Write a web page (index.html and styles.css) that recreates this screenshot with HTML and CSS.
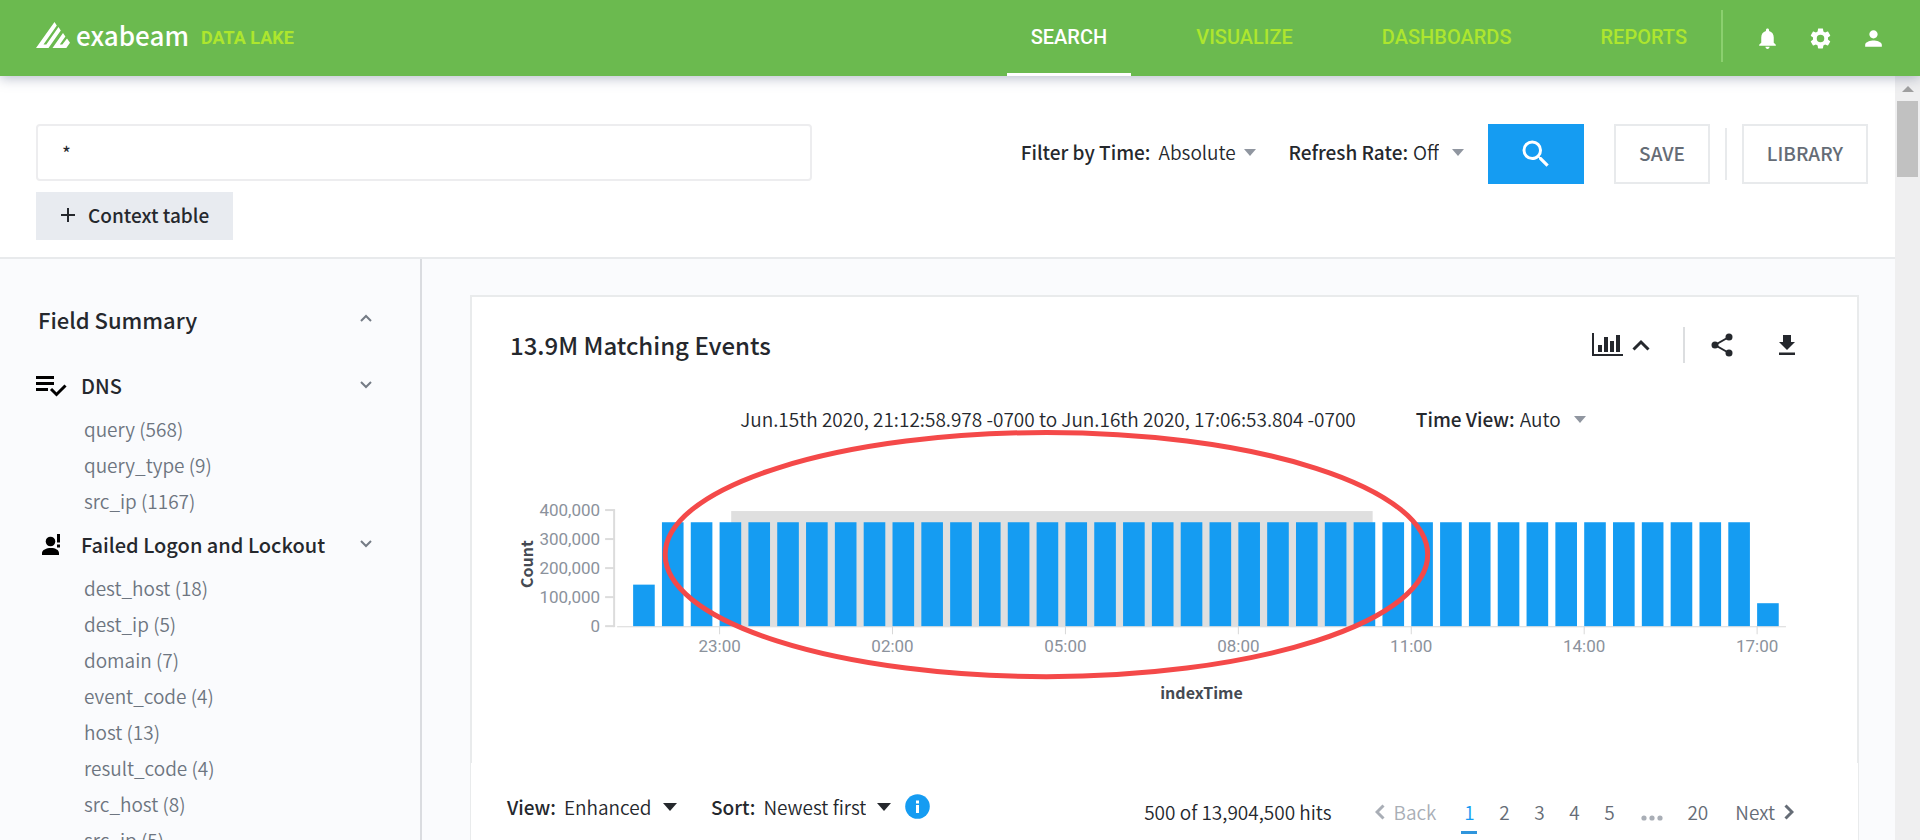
FILE: index.html
```html
<!DOCTYPE html>
<html lang="en">
<head>
<meta charset="utf-8">
<title>Exabeam Data Lake - Search</title>
<link rel="stylesheet" href="styles.css">
</head>
<body>
<header class="topbar">
  <a class="brand" href="#">
    <svg class="brand-mark" width="35" height="26" viewBox="0 0 35 26" aria-hidden="true">
      <path fill="#fff" d="M0 26 18.500 0 20.800 3.500 7.500 22.500H10.300L22.500 5 24.800 8.500 12.500 26ZM16.500 26 27 11 29.400 14.500 23.800 22.500H26.300L31 16.500 34 20.800 30.300 26Z"/>
    </svg>
    <span class="brand-name">exabeam</span>
    <span class="brand-product">DATA LAKE</span>
  </a>
  <nav class="tabs">
    <a class="tab tab-active" href="#">SEARCH</a>
    <a class="tab" href="#">VISUALIZE</a>
    <a class="tab" href="#">DASHBOARDS</a>
    <a class="tab" href="#">REPORTS</a>
  </nav>
  <div class="top-actions">
    <button class="icon-btn" aria-label="Notifications"><svg width="25" height="25" viewBox="0 0 24 24"><path d="M12 22c1.100 0 2-.9 2-2h-4c0 1.100.89 2 2 2zm6-6v-5c0-3.070-1.640-5.640-4.500-6.320V4c0-.83-.67-1.500-1.500-1.500s-1.500.67-1.500 1.500v.68C7.630 5.360 6 7.920 6 11v5l-2 2v1h16v-1l-2-2z"/></svg></button>
    <button class="icon-btn" aria-label="Settings"><svg width="25" height="25" viewBox="0 0 24 24"><path d="M19.140 12.940c.04-.3.06-.61.06-.94 0-.32-.02-.64-.07-.94l2.030-1.580c.18-.14.23-.41.12-.61l-1.920-3.320c-.12-.22-.37-.29-.59-.22l-2.390.96c-.5-.38-1.030-.7-1.620-.94l-.36-2.540c-.04-.24-.24-.41-.48-.41h-3.840c-.24 0-.43.17-.47.41l-.36 2.540c-.59.24-1.130.57-1.620.94l-2.390-.96c-.22-.08-.47 0-.59.22L2.740 8.870c-.12.21-.08.47.12.61l2.030 1.580c-.05.3-.09.63-.09.94s.02.64.07.94l-2.030 1.580c-.18.14-.23.41-.12.61l1.920 3.320c.12.22.37.29.59.22l2.390-.96c.5.38 1.030.7 1.620.94l.36 2.540c.05.24.24.41.48.41h3.840c.24 0 .44-.17.47-.41l.36-2.540c.59-.24 1.130-.56 1.620-.94l2.390.96c.22.08.47 0 .59-.22l1.920-3.320c.12-.22.07-.47-.12-.61l-2.010-1.580zM12 15.600A3.600 3.600 0 1 1 12 8.400a3.600 3.600 0 0 1 0 7.200z"/></svg></button>
    <button class="icon-btn" aria-label="Account"><svg width="25" height="25" viewBox="0 0 24 24"><path d="M12 12c2.210 0 4-1.790 4-4s-1.790-4-4-4-4 1.790-4 4 1.790 4 4 4zm0 2c-2.670 0-8 1.340-8 4v2h16v-2c0-2.660-5.330-4-8-4z"/></svg></button>
  </div>
</header>

<div class="viewport">
  <div class="page">
    <form class="searchbar">
      <div class="query">
        <input class="query-input" type="text" value="*" aria-label="Search query">
        <button class="context-btn" type="button">
          <svg width="16" height="16" viewBox="0 0 16 16" aria-hidden="true"><path d="M8 1v14M1 8h14" stroke="#25282d" stroke-width="2"/></svg>
          Context table
        </button>
      </div>
      <div class="controls">
        <div class="picker">
          <label for="time">Filter by Time:</label>
          <select id="time"><option>Absolute</option></select>
          <svg class="caret" width="12" height="7" viewBox="0 0 12 7" aria-hidden="true"><path d="M0 0h12L6 7z"/></svg>
        </div>
        <div class="picker picker-tight">
          <label for="rate">Refresh Rate:</label>
          <select id="rate"><option>Off</option></select>
          <svg class="caret" width="12" height="7" viewBox="0 0 12 7" aria-hidden="true"><path d="M0 0h12L6 7z"/></svg>
        </div>
        <button class="go-btn" type="submit" aria-label="Search"><svg width="36" height="36" viewBox="0 0 24 24"><path d="M15.500 14h-.79l-.28-.27A6.470 6.470 0 0 0 16 9.500 6.500 6.500 0 1 0 9.500 16c1.610 0 3.090-.59 4.230-1.570l.27.28v.79l5 4.990L20.490 19l-4.990-5zm-6 0C7.010 14 5 11.990 5 9.500S7.010 5 9.500 5 14 7.010 14 9.500 11.990 14 9.500 14z"/></svg></button>
        <button class="box-btn" type="button">SAVE</button>
        <span class="rule"></span>
        <button class="box-btn" type="button">LIBRARY</button>
      </div>
    </form>

    <div class="columns">
      <aside class="fields">
        <div class="fields-head">
          <h2>Field Summary</h2>
          <button class="chev-btn" aria-label="Collapse field summary"><svg width="12" height="8" viewBox="0 0 12 8"><path d="M1 7l5-5 5 5"/></svg></button>
        </div>
        <section class="group">
          <div class="group-head">
            <svg width="32" height="22" viewBox="0 0 32 22" aria-hidden="true"><path d="M0 2.500h18M0 8.500h18M0 14.500h12M15 14l5.500 5.500L29.500 10.500" fill="none" stroke="#000" stroke-width="3"/></svg>
            <h3>DNS</h3>
            <button class="chev-btn" aria-label="Toggle DNS"><svg width="12" height="8" viewBox="0 0 12 8"><path d="M1 1l5 5 5-5"/></svg></button>
          </div>
          <ul>
            <li><a href="#">query (568)</a></li>
            <li><a href="#">query_type (9)</a></li>
            <li><a href="#">src_ip (1167)</a></li>
          </ul>
        </section>
        <section class="group">
          <div class="group-head">
            <svg width="32" height="22" viewBox="0 0 32 22" aria-hidden="true"><circle cx="14.500" cy="7.500" r="4.800"/><path d="M6 21v-2c0-3 4.500-5 9-5s8 2 8 5v2zM21 0h3v8.500h-3zM21 10.500h3v3h-3z"/></svg>
            <h3>Failed Logon and Lockout</h3>
            <button class="chev-btn" aria-label="Toggle Failed Logon and Lockout"><svg width="12" height="8" viewBox="0 0 12 8"><path d="M1 1l5 5 5-5"/></svg></button>
          </div>
          <ul>
            <li><a href="#">dest_host (18)</a></li>
            <li><a href="#">dest_ip (5)</a></li>
            <li><a href="#">domain (7)</a></li>
            <li><a href="#">event_code (4)</a></li>
            <li><a href="#">host (13)</a></li>
            <li><a href="#">result_code (4)</a></li>
            <li><a href="#">src_host (8)</a></li>
            <li><a href="#">src_ip (5)</a></li>
          </ul>
        </section>
      </aside>

      <main class="results">
        <section class="card">
          <div class="card-head">
            <h1>13.9M Matching Events</h1>
            <div class="card-tools">
              <button class="tool" aria-label="Toggle chart">
                <svg width="31" height="24" viewBox="0 0 31 24"><path d="M0 0h2v21h29v2H0zM6 12h4v7H6zM12 4h4v15h-4zM18 8h4v11h-4zM24 2h4v17h-4z"/></svg>
                <svg width="18" height="12" viewBox="0 0 18 12"><path d="M1.500 10.500 9 3l7.500 7.500" fill="none" stroke="#25282d" stroke-width="3"/></svg>
              </button>
              <span class="tool-rule"></span>
              <button class="tool" aria-label="Share"><svg width="22" height="24" viewBox="0 0 22 24"><path d="M18 4 4 12l14 8" fill="none" stroke="#25282d" stroke-width="2"/><circle cx="18" cy="4" r="3.500"/><circle cx="4" cy="12" r="3.500"/><circle cx="18" cy="20" r="3.500"/></svg></button>
              <button class="tool" aria-label="Download"><svg width="16" height="20" viewBox="0 0 16 20"><path d="M4 0h8v7h4l-8 8-8-8h4zM0 17.500h16V20H0z"/></svg></button>
            </div>
          </div>
          <div class="range">
            <span>Jun.15th 2020, 21:12:58.978 -0700 to Jun.16th 2020, 17:06:53.804 -0700</span>
            <div class="picker picker-tight">
              <label for="tview">Time View:</label>
              <select id="tview"><option>Auto</option></select>
              <svg class="caret" width="12" height="7" viewBox="0 0 12 7" aria-hidden="true"><path d="M0 0h12L6 7z"/></svg>
            </div>
          </div>
          <svg class="chart" id="chart" viewBox="0 0 1384 332" role="img" aria-label="Events by indexTime"></svg>
        </section>

        <section class="list-bar">
          <div class="list-opts">
            <div class="picker">
              <label for="view">View:</label>
              <select id="view"><option>Enhanced</option></select>
              <svg class="caret caret-dark" width="14" height="8" viewBox="0 0 14 8" aria-hidden="true"><path d="M0 0h14L7 8z"/></svg>
            </div>
            <div class="picker">
              <label for="sort">Sort:</label>
              <select id="sort"><option>Newest first</option></select>
              <svg class="caret caret-dark" width="14" height="8" viewBox="0 0 14 8" aria-hidden="true"><path d="M0 0h14L7 8z"/></svg>
            </div>
            <button class="info" aria-label="Information"><svg width="25" height="25" viewBox="0 0 25 25"><circle cx="12.500" cy="12.500" r="12.300" fill="#159cf2"/><path d="M11 6.500h3v3h-3zM11 11h3v8h-3z" fill="#fff"/></svg></button>
          </div>
          <div class="pager">
            <span class="hits">500 of 13,904,500 hits</span>
            <a class="step step-off" href="#"><svg width="10" height="16" viewBox="0 0 10 16"><path d="M8.500 1.500 2 8l6.500 6.500"/></svg>Back</a>
            <div class="pages">
              <a class="num num-on" href="#">1</a>
              <a class="num" href="#">2</a>
              <a class="num" href="#">3</a>
              <a class="num" href="#">4</a>
              <a class="num" href="#">5</a>
              <svg class="dots" width="22" height="6" viewBox="0 0 22 6" aria-label="more pages"><circle cx="3" cy="3" r="2.600"/><circle cx="11" cy="3" r="2.600"/><circle cx="19" cy="3" r="2.600"/></svg>
              <a class="num" href="#">20</a>
            </div>
            <a class="step" href="#">Next<svg width="10" height="16" viewBox="0 0 10 16"><path d="M1.500 1.500 8 8l-6.500 6.500"/></svg></a>
          </div>
        </section>
      </main>
    </div>
  </div>
  <div class="scroll" aria-hidden="true">
    <svg width="12" height="6" viewBox="0 0 12 6"><path d="M6 0l6 6H0z" fill="#a0a0a0"/></svg>
    <div class="thumb"></div>
  </div>
</div>
<script src="chart.js"></script>
</body>
</html>
```
FILE: styles.css
```css
* { box-sizing: border-box; }
body {
  margin: 0;
  height: 100vh;
  display: flex;
  flex-direction: column;
  overflow: hidden;
  font-family: "Noto Sans CJK SC", "Noto Sans", sans-serif;
  font-size: 19px;
  line-height: 24px;
  color: #25282d;
  background: #fff;
}
h1, h2, h3, ul { margin: 0; padding: 0; font-weight: 500; }
ul { list-style: none; }
a { color: inherit; text-decoration: none; }
button, input, select { font: inherit; color: inherit; }
button { background: none; border: 0; padding: 0; }
svg { display: block; flex: none; }

.topbar {
  position: relative;
  z-index: 1;
  flex: none;
  height: 76px;
  display: flex;
  align-items: stretch;
  padding: 0 34px 0 36px;
  background: #6bba4f;
  box-shadow: 0 2px 12px rgba(70, 85, 120, .4);
}
.brand { display: flex; align-items: center; margin-right: auto; }
.brand-mark { margin: 0 5px 6px 0; }
.brand-name { color: #fff; font-size: 26px; font-weight: 500; line-height: 32px; padding-bottom: 6px; }
.brand-product {
  margin-left: 12px;
  color: #ade62e;
  font: 700 18px/24px Roboto, sans-serif;
}
.tabs { display: flex; gap: 41px; }
.tab {
  padding: 25px 24px 0;
  font: 500 20px/24px Roboto, sans-serif;
  color: #ade62e;
}
.tab-active { color: #fff; border-bottom: 3px solid #fff; }
.top-actions {
  display: flex;
  align-items: center;
  gap: 28px;
  height: 52px;
  margin: 10px 0 0 10px;
  padding: 4px 0 0 32px;
  border-left: 2px solid #8bd06f;
}
.icon-btn svg { fill: #fff; }

.viewport { flex: 1; min-height: 0; display: flex; overflow: hidden; }
.page { flex: 1; min-width: 0; display: flex; flex-direction: column; }
.scroll {
  width: 25px;
  background: #efeff0;
  display: flex;
  flex-direction: column;
  align-items: center;
  gap: 9px;
  padding-top: 10px;
}
.thumb { width: 21px; height: 76px; background: #c1c1c1; }

.searchbar {
  flex: none;
  display: flex;
  justify-content: space-between;
  gap: 40px;
  padding: 48px 27px 17px 36px;
  border-bottom: 2px solid #e8eaec;
}
.query { flex: 0 1 776px; display: flex; flex-direction: column; align-items: flex-start; gap: 11px; }
.query-input {
  width: 100%;
  height: 57px;
  padding: 0 24px;
  border: 2px solid #ededef;
  border-radius: 4px;
  background: #fff;
}
.context-btn {
  display: flex;
  align-items: center;
  gap: 12px;
  height: 48px;
  padding: 0 24px 2px;
  background: #e8ebf0;
  font-weight: 500;
}
.controls { display: flex; align-items: center; height: 60px; }
.picker { display: flex; align-items: center; gap: 8px; }
.picker-tight { gap: 5px; }
.picker label { font-weight: 500; }
.picker select {
  appearance: none;
  border: 0;
  padding: 0;
  background: none;
  font-weight: 350;
}
.caret { fill: #9096a0; }
.picker-tight .caret { margin-left: 8px; }
.caret-dark { fill: #25282d; }
.controls .picker { margin-right: 32px; padding-bottom: 4px; }
.controls .picker-tight { margin-right: 24px; }
.go-btn {
  display: flex;
  align-items: center;
  justify-content: center;
  width: 96px;
  height: 60px;
  margin-right: 30px;
  background: #159cf2;
}
.go-btn svg { fill: #fff; }
.box-btn {
  height: 60px;
  padding: 0 23px 2px;
  border: 2px solid #e8eaec;
  color: #656c76;
  font-weight: 500;
}
.rule { width: 2px; height: 52px; margin: 0 15px; background: #e8eaec; }

.columns { flex: 1; min-height: 0; display: flex; background: #fafbfd; }
.fields {
  flex: none;
  width: 422px;
  padding: 46px 48px 0 36px;
  border-right: 2px solid #dadce0;
}
.fields-head { display: flex; align-items: center; justify-content: space-between; padding-left: 2px; margin-bottom: 35px; }
.fields-head h2 { font-size: 22px; line-height: 28px; }
.chev-btn { padding-bottom: 3px; }
.chev-btn svg { fill: none; stroke: #747b85; stroke-width: 2; }
.group { margin-bottom: 8px; }
.group-head { display: flex; align-items: center; height: 36px; margin-bottom: 7px; }
.group-head h3 { flex: 1; margin-left: 13px; font-size: 20px; line-height: 24px; }
.group li { padding-left: 48px; line-height: 36px; color: #6d7580; font-weight: 350; }

.results { flex: 1; min-width: 0; padding: 36px 36px 0 48px; }
.card { border: 2px solid #e9ebec; border-bottom: 0; background: #fff; }
.card-head { display: flex; align-items: center; justify-content: space-between; padding: 30px 62px 0 38px; }
.card-head h1 { font-size: 24px; line-height: 36px; }
.card-tools { display: flex; align-items: center; }
.tool { display: flex; align-items: center; gap: 9px; fill: #25282d; }
.tool + .tool { margin-left: 46px; }
.tool-rule { width: 2px; height: 36px; margin: 0 26px 0 33px; background: #dcdee0; }
.range {
  display: flex;
  align-items: center;
  justify-content: center;
  gap: 60px;
  margin-top: 44px;
  padding-right: 3px;
  font-weight: 350;
}
.chart { width: 100%; height: auto; overflow: visible; }
.axis { fill: none; stroke: #dcdcdc; stroke-width: 2; }
.axis-thin { fill: none; stroke: #d8d8d8; stroke-width: 1; }
.tick-label { font: 400 17px Roboto, sans-serif; fill: #8b929c; }
.axis-title { font: 700 16px "Noto Sans CJK SC", "Noto Sans", sans-serif; fill: #454a52; }
.bar { fill: #159cf2; }
.selection { fill: #dfdfdf; }
.marker { fill: none; stroke: #f44949; stroke-width: 5; }

.list-bar {
  display: flex;
  align-items: flex-start;
  justify-content: space-between;
  padding: 31px 64px 20px 36px;
  background: #fff;
  border: solid #e9ebec;
  border-width: 0 1px;
}
.list-opts { display: flex; align-items: center; }
.list-opts .picker { margin-right: 34px; }
.list-opts .caret { margin-left: 3px; }
.list-opts .picker + .picker { margin-right: 14px; }
.pager { display: flex; align-items: flex-start; padding-top: 6px; color: #656c76; font-weight: 350; }
.hits { margin-right: 43px; color: #25282d; }
.step { display: flex; align-items: center; gap: 9px; }
.step svg { fill: none; stroke: currentColor; stroke-width: 3; }
.step-off { color: #a9aeb6; }
.pages { display: flex; gap: 19px; margin: 0 27px 0 25px; }
.num { min-width: 16px; height: 34px; text-align: center; }
.num-on { color: #159cf2; border-bottom: 3px solid #2f95dc; }
.dots { margin: 15px 5px 0; fill: #a9aeb6; }
```
FILE: chart.js
```js
const svg = document.getElementById("chart");
const BASE = 195;
const FIRST = 161;
const PITCH = 28.8;
const BAR_W = 21.6;
const COUNTS = [143000, ...Array(38).fill(358000), 79000];

function add(name, attrs, text) {
  const el = document.createElementNS("http://www.w3.org/2000/svg", name);
  for (const key in attrs) el.setAttribute(key, attrs[key]);
  if (text) el.textContent = text;
  svg.appendChild(el);
}

add("rect", { class: "selection", x: 259, y: BASE - 115, width: 641, height: 115 });

add("path", { class: "axis", d: `M142 ${BASE - 117}V${BASE + 1}` });
["400,000", "300,000", "200,000", "100,000", "0"].forEach((label, i) => {
  const y = BASE - 116 + i * 29;
  add("path", { class: "axis", d: `M133 ${y}h9` });
  add("text", { class: "tick-label", x: 128, y: y + 6, "text-anchor": "end" }, label);
});

add("path", { class: "axis-thin", d: `M145 ${BASE + 0.5}H1313` });
["23:00", "02:00", "05:00", "08:00", "11:00", "14:00", "17:00"].forEach((label, i) => {
  const x = FIRST + PITCH * (3 + i * 6);
  add("path", { class: "axis-thin", d: `M${x} ${BASE}v8` });
  add("text", { class: "tick-label", x: x, y: BASE + 26, "text-anchor": "middle" }, label);
});

COUNTS.forEach((count, i) => {
  const h = count * 0.00029;
  add("rect", { class: "bar", x: FIRST + PITCH * i, y: BASE - h, width: BAR_W, height: h });
});

add("text", { class: "axis-title", x: 729, y: BASE + 73, "text-anchor": "middle" }, "indexTime");
add("text", { class: "axis-title", transform: `translate(61 ${BASE - 62}) rotate(-90)`, "text-anchor": "middle" }, "Count");
add("ellipse", { class: "marker", cx: 574, cy: BASE - 71.5, rx: 381, ry: 122 });
```
